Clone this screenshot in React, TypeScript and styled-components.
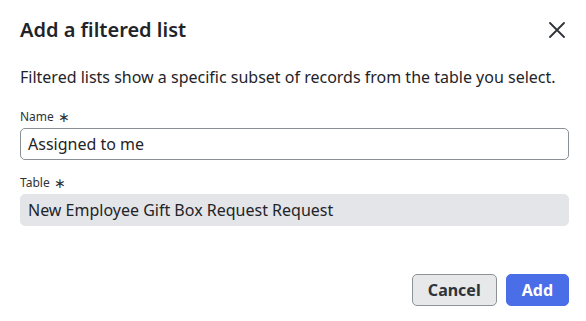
import React from "react";
import styled, { createGlobalStyle } from "styled-components";

const Global = createGlobalStyle`
  html, body { margin: 0; padding: 0; background: #ffffff; }
  body { font-family: "Noto Sans", "Open Sans", sans-serif; color: #1f2429; }
  * { box-sizing: border-box; }
`;

const Dialog = styled.div`
  width: 586px;
  height: 321px;
  padding: 14px 17px 15px 20px;
  display: flex;
  flex-direction: column;
`;

const Header = styled.div`
  display: flex;
  align-items: center;
  justify-content: space-between;
  height: 32px;
`;

const Title = styled.h1`
  margin: 0;
  font-size: 20px;
  font-weight: 600;
  line-height: 28px;
  color: #1f2429;
`;

const CloseButton = styled.button`
  width: 24px;
  height: 24px;
  padding: 0;
  border: 0;
  background: transparent;
  display: flex;
  align-items: center;
  justify-content: center;
  cursor: pointer;
`;

const Description = styled.p`
  margin: 19px 0 0;
  font-size: 16px;
  line-height: 24px;
  color: #1f2429;
`;

const Field = styled.div<{ $top: number }>`
  margin-top: ${(p) => p.$top}px;
  display: flex;
  flex-direction: column;
  gap: 3px;
  width: 549px;
`;

const Label = styled.label`
  font-size: 12px;
  line-height: 16px;
  color: #2e3338;
  display: flex;
  align-items: center;
  gap: 4px;
`;

const Star = styled.span`
  font-size: 14px;
  line-height: 16px;
  color: #2e3338;
`;

const Input = styled.div<{ $readOnly?: boolean }>`
  height: 32px;
  border-radius: 5px;
  border: 1px solid ${(p) => (p.$readOnly ? "#e3e5e8" : "#8a9096")};
  background: ${(p) => (p.$readOnly ? "#e3e5e8" : "#ffffff")};
  padding: 0 7px;
  display: flex;
  align-items: center;
  font-size: 16px;
  color: #1f2429;
`;

const Footer = styled.div`
  margin-top: auto;
  display: flex;
  justify-content: flex-end;
  gap: 9px;
  width: 549px;
`;

const Button = styled.button<{ $primary?: boolean }>`
  height: 32px;
  padding: 0 15px;
  border-radius: 5px;
  font-family: "Noto Sans", "Open Sans", sans-serif;
  font-size: 16px;
  font-weight: 700;
  border: 1px solid ${(p) => (p.$primary ? "#4a6ee8" : "#8d9297")};
  background: ${(p) => (p.$primary ? "#4a6ee8" : "#e6e8ea")};
  color: ${(p) => (p.$primary ? "#ffffff" : "#2e3338")};
  cursor: pointer;
`;

export default function App() {
  return (
    <>
      <Global />
      <Dialog>
        <Header>
          <Title>Add a filtered list</Title>
          <CloseButton aria-label="Close">
            <svg width="16" height="16" viewBox="0 0 16 16">
              <path d="M1 1 L15 15 M15 1 L1 15" stroke="#2e3338" strokeWidth="1.8" strokeLinecap="round" />
            </svg>
          </CloseButton>
        </Header>
        <Description>Filtered lists show a specific subset of records from the table you select.</Description>
        <Field $top={20}>
          <Label>
            Name <Star>∗</Star>
          </Label>
          <Input>Assigned to me</Input>
        </Field>
        <Field $top={15}>
          <Label>
            Table <Star>∗</Star>
          </Label>
          <Input $readOnly>New Employee Gift Box Request Request</Input>
        </Field>
        <Footer>
          <Button>Cancel</Button>
          <Button $primary>Add</Button>
        </Footer>
      </Dialog>
    </>
  );
}
